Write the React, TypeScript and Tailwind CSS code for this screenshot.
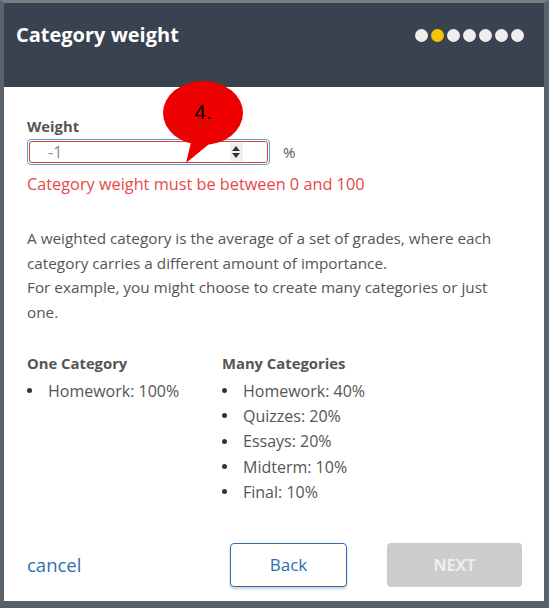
import { useState } from 'react';

const STEPS = 7;
const ACTIVE = 1;

export default function App() {
  const [weight, setWeight] = useState('-1');
  const invalid = weight === '' || Number(weight) < 0 || Number(weight) > 100;

  return (
    <div
      className="relative w-[549px] h-[608px] flex flex-col bg-white border-t-[3px] border-t-[#7a7d80] border-l-[4px] border-l-[#5a636d] border-r-[5px] border-r-[#5a636d] border-b-[7px] border-b-[#565e67]"
      style={{ fontFamily: '"Open Sans", "Noto Sans", sans-serif' }}
    >
      {/* Header */}
      <div className="h-[84px] bg-[#38434f] flex items-start justify-between pl-[12px] pr-[20px] pt-[19px]">
        <h1 className="text-[20px] leading-[26px] font-bold text-white">Category weight</h1>
        <div className="flex gap-[3px] mt-[7px]">
          {Array.from({ length: STEPS }).map((_, i) => (
            <span
              key={i}
              className={i === ACTIVE ? 'w-[13px] h-[13px] rounded-full bg-[#f6c400]' : 'w-[13px] h-[13px] rounded-full bg-[#eeeeee]'}
            />
          ))}
        </div>
      </div>

      {/* Body */}
      <div className="flex-1 flex flex-col pl-[23px] pr-[20px] pt-[30px] text-[#555555]">
        <label className="text-[14.8px] leading-[18px] font-bold text-[#555555]">Weight</label>
        <div className="flex items-center mt-[4px]">
          <div className="w-[243px] h-[26px] rounded-[4px] border border-[#5aa0e6] p-[1px]">
            <div className="h-full rounded-[3px] border border-[#d9442f] flex items-center pl-[18px] pr-[24px]">
              <input
                value={weight}
                onChange={(e) => setWeight(e.target.value)}
                className="w-full text-[16px] text-[#888888] outline-none bg-transparent"
              />
              <span className="w-[14px] h-[18px] bg-[#eeeeee] flex flex-col items-center justify-center gap-[2px]">
                <svg width="8" height="5" viewBox="0 0 8 5"><path d="M4 0 L8 5 L0 5 Z" fill="#333" /></svg>
                <svg width="8" height="5" viewBox="0 0 8 5"><path d="M0 0 L8 0 L4 5 Z" fill="#333" /></svg>
              </span>
            </div>
          </div>
          <span className="ml-[13px] text-[15px] text-[#555555]">%</span>
        </div>
        {invalid && (
          <p className="mt-[8px] text-[16.3px] leading-[22px] text-[#e8474a]">Category weight must be between 0 and 100</p>
        )}

        <p className="mt-[31px] text-[15.3px] leading-[24.5px] text-[#555555] pr-[20px]">
          A weighted category is the average of a set of grades, where each category carries a different amount of importance.
          <br />
          For example, you might choose to create many categories or just one.
        </p>

        <div className="flex mt-[29px] text-[16px]">
          <div className="w-[195px]">
            <h3 className="text-[14.8px] leading-[20px] font-bold">One Category</h3>
            <ul className="mt-[5px]">
              <li className="flex items-center h-[25.3px]">
                <span className="w-[5px] h-[5px] rounded-full bg-[#333] mr-[16px]" />
                Homework: 100%
              </li>
            </ul>
          </div>
          <div>
            <h3 className="text-[14.8px] leading-[20px] font-bold">Many Categories</h3>
            <ul className="mt-[5px]">
              {['Homework: 40%', 'Quizzes: 20%', 'Essays: 20%', 'Midterm: 10%', 'Final: 10%'].map((item) => (
                <li key={item} className="flex items-center h-[25.3px]">
                  <span className="w-[5px] h-[5px] rounded-full bg-[#333] mr-[16px]" />
                  {item}
                </li>
              ))}
            </ul>
          </div>
        </div>

        {/* Footer */}
        <div className="mt-auto mb-[14px] flex items-center">
          <a href="#" className="text-[18.5px] text-[#2f6db5] w-[203px]">cancel</a>
          <button className="w-[117px] h-[44px] rounded-[4px] border border-[#2e6db4] bg-white text-[17px] text-[#2e6db4] shadow-[0_2px_3px_rgba(0,0,0,0.2)]">
            Back
          </button>
          <button disabled className="ml-[40px] w-[135px] h-[44px] rounded-[4px] bg-[#cccccc] text-[16px] font-bold text-[#eeeeee]">
            NEXT
          </button>
        </div>
      </div>

      {/* Step callout */}
      <div className="absolute left-[158px] top-[77px] w-[82px] h-[86px] pointer-events-none">
        <svg width="82" height="86" viewBox="0 0 82 86" className="absolute inset-0">
          <ellipse cx="41" cy="33" rx="40" ry="32" fill="#ee0000" />
          <path d="M30 58 L24 83 L52 60 Z" fill="#ee0000" />
        </svg>
        <span className="absolute left-0 right-0 top-[20px] text-center text-[21px] leading-[24px] text-black" style={{ fontFamily: '"Liberation Sans", Arial, sans-serif' }}>
          4.
        </span>
      </div>
    </div>
  );
}
